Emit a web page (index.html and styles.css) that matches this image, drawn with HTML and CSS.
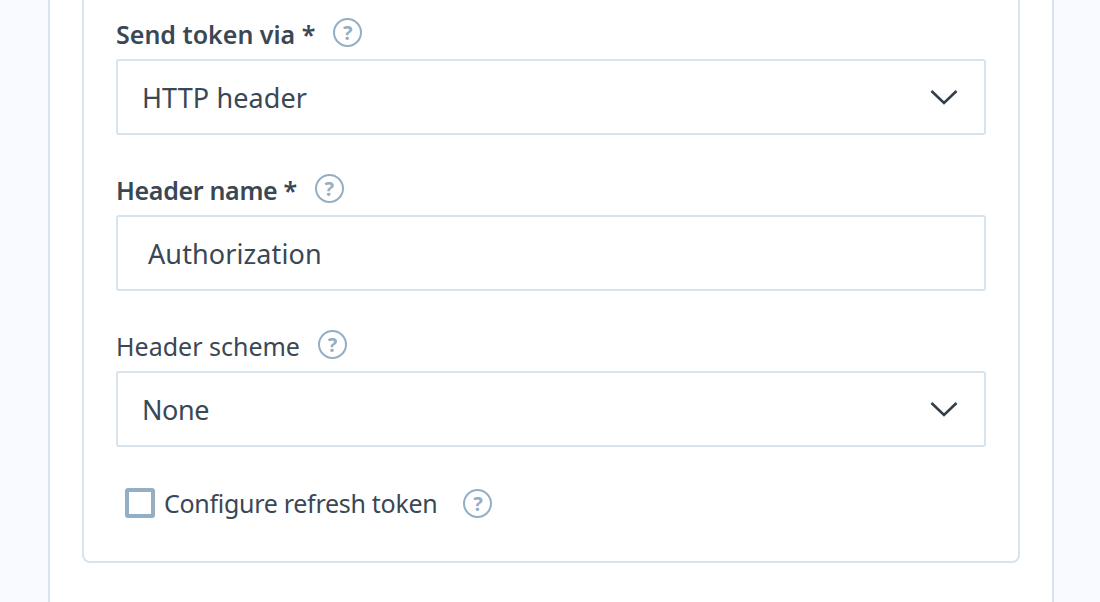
FILE: index.html
```html
<!DOCTYPE html>
<html lang="en">
<head>
<meta charset="utf-8">
<title>Send token settings</title>
<link rel="stylesheet" href="styles.css">
</head>
<body>
<main class="panel">
  <form class="card">
    <div class="field">
      <div class="label-row">
        <label class="label strong wide">Send token via *</label>
        <span class="help">?</span>
      </div>
      <div class="control select"><span>HTTP header</span>
        <svg class="chev" viewBox="0 0 28 16" width="28" height="16"><path d="M1.5 2 14 14 26.500 2" fill="none" stroke="#343f4b" stroke-width="2.600"/></svg>
      </div>
    </div>
    <div class="field">
      <div class="label-row">
        <label class="label strong">Header name *</label>
        <span class="help">?</span>
      </div>
      <div class="control text"><span>Authorization</span></div>
    </div>
    <div class="field">
      <div class="label-row">
        <label class="label wide">Header scheme</label>
        <span class="help">?</span>
      </div>
      <div class="control select"><span class="tight">None</span>
        <svg class="chev" viewBox="0 0 28 16" width="28" height="16"><path d="M1.5 2 14 14 26.500 2" fill="none" stroke="#343f4b" stroke-width="2.600"/></svg>
      </div>
    </div>
    <div class="check-row">
      <span class="box"></span>
      <label class="label">Configure refresh token</label>
      <span class="help help-b">?</span>
    </div>
  </form>
</main>
</body>
</html>
```
FILE: styles.css
```css
* { box-sizing: border-box; }
html, body { margin: 0; height: 602px; overflow: hidden; }
body {
  background: #f8faff;
  padding: 0 46px 0 48px;
  font-family: "Noto Sans", "Open Sans", sans-serif;
  color: #3a4754;
}
.panel {
  height: 602px;
  background: #fff;
  border-left: 2px solid #d6e4f0;
  border-right: 2px solid #d6e4f0;
  padding: 0 32px 39px;
  display: flex;
  flex-direction: column;
  justify-content: flex-end;
}
.card {
  flex: none;
  border: 2px solid #d6e4f0;
  border-radius: 8px;
  padding: 100px 32px 43px;
}
.field { margin-bottom: 34px; }
.label-row {
  height: 46px;
  display: flex;
  align-items: flex-start;
  padding-top: 8px;
}
.label {
  font-size: 25px;
  line-height: 26px;
  letter-spacing: -0.29px;
  white-space: nowrap;
}
.strong { font-weight: 600; letter-spacing: -0.33px; }
.wide { letter-spacing: 0; }
.help {
  width: 29px;
  height: 29px;
  margin: -3px 0 0 18px;
  border: 2px solid #94aec4;
  border-radius: 50%;
  color: #94aec4;
  font-size: 20px;
  font-weight: 700;
  line-height: 25px;
  text-align: center;
  flex: none;
}
.control {
  height: 76px;
  border: 2px solid #d6e4f0;
  border-radius: 3px;
  background: #fff;
  display: flex;
  align-items: center;
  justify-content: space-between;
  font-size: 27px;
  letter-spacing: 0.1px;
}
.select { padding: 0 26px 0 24px; }
.text { padding: 0 30px; }
.tight { letter-spacing: -0.4px; }
.chev { flex: none; }
.check-row {
  display: flex;
  align-items: center;
  height: 30px;
  padding-left: 9px;
  margin-top: 41px;
}
.box {
  width: 30px;
  height: 30px;
  border: 4px solid #94aec4;
  border-radius: 3px;
  margin-right: 9px;
  flex: none;
}
.help-b { margin: 0 0 0 26px; }
```
